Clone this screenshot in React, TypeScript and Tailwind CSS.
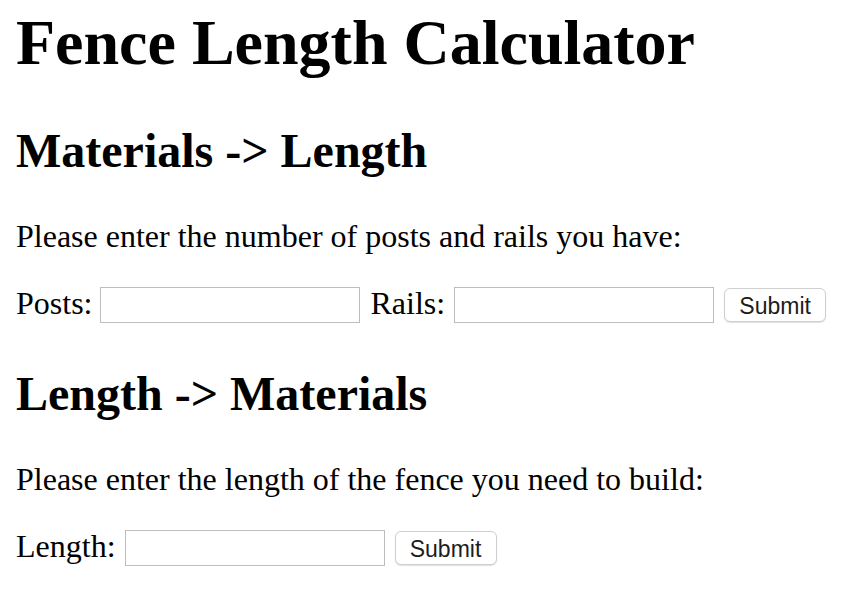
import React from "react";

function Row({ children }: { children: React.ReactNode }) {
  return <div className="mt-[32px] flex h-[36px] items-center">{children}</div>;
}

function Label({ text, ml = "" }: { text: string; ml?: string }) {
  return <span className={`${ml} mb-[4px] whitespace-pre text-[32px] leading-[37px]`}>{text}</span>;
}

function Field({ ml }: { ml: string }) {
  return (
    <input
      type="text"
      className={`${ml} h-[36px] w-[260px] border border-[#bdbdbd] bg-white outline-none`}
    />
  );
}

function SubmitButton({ ml }: { ml: string }) {
  return (
    <button
      type="button"
      className={`${ml} flex h-[34px] w-[102px] items-center justify-center rounded-[6px] border border-[#cfcfcf] bg-white pt-[2px] text-[23px] leading-none text-[#1c1c1c] shadow-[0_1px_1px_rgba(0,0,0,0.12)]`}
      style={{ fontFamily: '"Liberation Sans", Arial, sans-serif' }}
    >
      Submit
    </button>
  );
}

export default function App() {
  return (
    <div
      className="min-h-[596px] w-[862px] bg-white px-[16px] pt-[6px] text-black"
      style={{ fontFamily: '"Liberation Serif", "Times New Roman", serif' }}
    >
      <h1 className="text-[64px] font-bold leading-[74px]">Fence Length Calculator</h1>

      <h2 className="mt-[43px] text-[48px] font-bold leading-[55px]">Materials -&gt; Length</h2>
      <p className="mt-[40px] text-[32px] leading-[37px]">
        Please enter the number of posts and rails you have:
      </p>
      <Row>
        <Label text="Posts:" />
        <Field ml="ml-[8px]" />
        <Label text="Rails:" ml="ml-[10px]" />
        <Field ml="ml-[9px]" />
        <SubmitButton ml="ml-[10px]" />
      </Row>

      <h2 className="mt-[43px] text-[48px] font-bold leading-[55px]">Length -&gt; Materials</h2>
      <p className="mt-[40px] text-[32px] leading-[37px]">
        Please enter the length of the fence you need to build:
      </p>
      <Row>
        <Label text="Length:" />
        <Field ml="ml-[9px]" />
        <SubmitButton ml="ml-[10px]" />
      </Row>
    </div>
  );
}
